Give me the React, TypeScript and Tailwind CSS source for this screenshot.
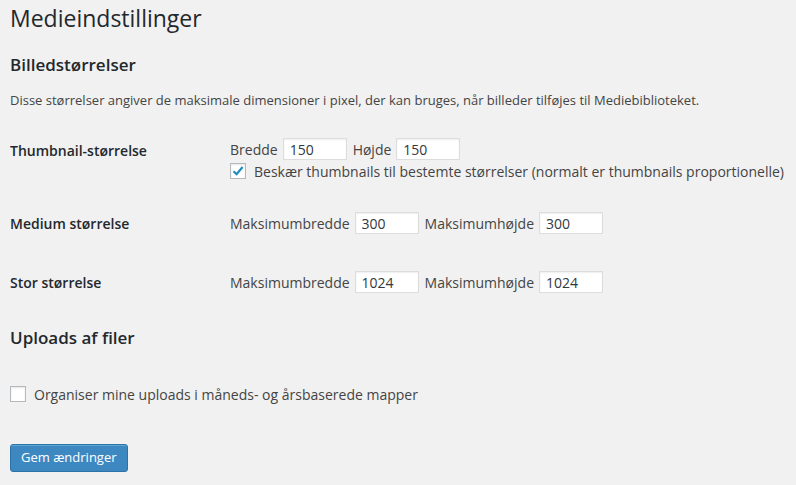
import React from "react";

const font = { fontFamily: '"Open Sans", "Noto Sans", sans-serif' };

function NumInput({ value }: { value: string }) {
  return (
    <input
      type="text"
      defaultValue={value}
      className="w-[64px] h-[22px] bg-white border border-[#dddddd] px-[6px] text-[14px] text-[#32373c] outline-none shadow-[inset_0_1px_2px_rgba(0,0,0,0.07)]"
    />
  );
}

function Box({ checked }: { checked?: boolean }) {
  return (
    <span className="w-[16px] h-[16px] shrink-0 bg-white border border-[#b4b9be] flex items-center justify-center shadow-[inset_0_1px_2px_rgba(0,0,0,0.1)]">
      {checked && (
        <svg width="14" height="14" viewBox="0 0 14 14">
          <path d="M2.5 7.2 L5.6 10.2 L11.6 3" fill="none" stroke="#1e8cbe" strokeWidth="2.2" />
        </svg>
      )}
    </span>
  );
}

export default function App() {
  return (
    <div className="min-h-[485px] w-[796px] bg-[#f1f1f1] text-[#444] px-[10px]" style={font}>
      <h1 className="text-[23px] text-[#23282d] pt-[4px] leading-[29px]">Medieindstillinger</h1>

      <h2 className="text-[17px] font-semibold text-[#23282d] mt-[21px] leading-[22px]">Billedstørrelser</h2>
      <p className="text-[13px] mt-[14px] leading-[20px]">
        Disse størrelser angiver de maksimale dimensioner i pixel, der kan bruges, når billeder tilføjes til Mediebiblioteket.
      </p>

      <div className="mt-[11px] text-[14px]">
        {/* thumbnail */}
        <div className="flex">
          <div className="w-[220px] shrink-0 pt-[19px] font-semibold text-[#23282d]">Thumbnail-størrelse</div>
          <div className="pt-[17px] pb-[11px]">
            <div className="flex items-center gap-[5px] h-[22px]">
              <span>Bredde</span>
              <NumInput value="150" />
              <span className="ml-[1px]">Højde</span>
              <NumInput value="150" />
            </div>
            <label className="flex items-center gap-[8px] mt-[3px] h-[16px]">
              <Box checked />
              <span>Beskær thumbnails til bestemte størrelser (normalt er thumbnails proportionelle)</span>
            </label>
          </div>
        </div>

        {/* medium */}
        <div className="flex">
          <div className="w-[220px] shrink-0 pt-[23px] font-semibold text-[#23282d]">Medium størrelse</div>
          <div className="pt-[22px] pb-[15px]">
            <div className="flex items-center gap-[5px] h-[22px]">
              <span>Maksimumbredde</span>
              <NumInput value="300" />
              <span className="ml-[1px]">Maksimumhøjde</span>
              <NumInput value="300" />
            </div>
          </div>
        </div>

        {/* large */}
        <div className="flex">
          <div className="w-[220px] shrink-0 pt-[23px] font-semibold text-[#23282d]">Stor størrelse</div>
          <div className="pt-[22px] pb-[15px]">
            <div className="flex items-center gap-[5px] h-[22px]">
              <span>Maksimumbredde</span>
              <NumInput value="1024" />
              <span className="ml-[1px]">Maksimumhøjde</span>
              <NumInput value="1024" />
            </div>
          </div>
        </div>
      </div>

      <h2 className="text-[17px] font-semibold text-[#23282d] mt-[19px] leading-[22px]">Uploads af filer</h2>

      <label className="flex items-center gap-[8px] mt-[37px] h-[16px] text-[14px]">
        <Box />
        <span>Organiser mine uploads i måneds- og årsbaserede mapper</span>
      </label>

      <button className="mt-[42px] h-[28px] px-[10px] bg-[#3e88c2] border border-[#2e73a8] rounded-[3px] text-white text-[13px] shadow-[inset_0_1px_0_rgba(120,200,230,0.5)]">
        Gem ændringer
      </button>
    </div>
  );
}
